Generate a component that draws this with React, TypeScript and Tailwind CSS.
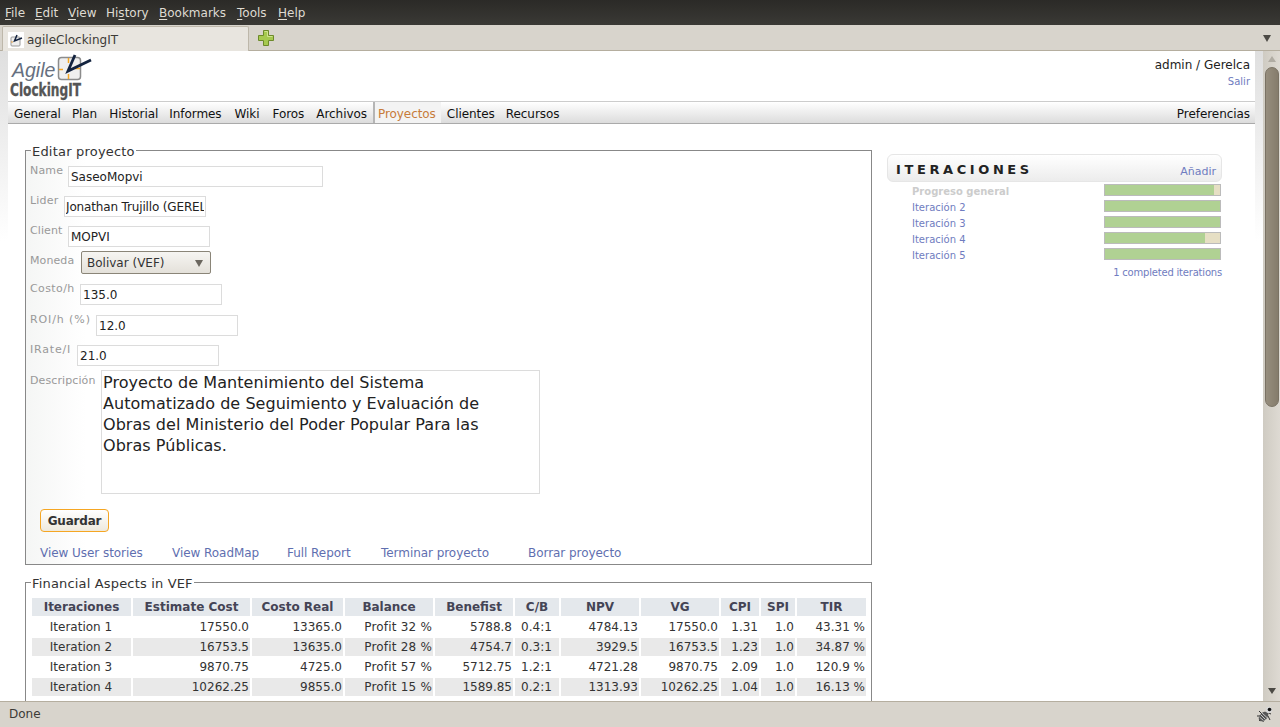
const menus = [
  { pre: "", key: "F", rest: "ile", width: "w-[30px]" },
  { pre: "", key: "E", rest: "dit", width: "w-[33px]" },
  { pre: "", key: "V", rest: "iew", width: "w-[38px]" },
  { pre: "Hi", key: "s", rest: "tory", width: "w-[53px]" },
  { pre: "", key: "B", rest: "ookmarks", width: "w-[78px]" },
  { pre: "", key: "T", rest: "ools", width: "w-[41px]" },
  { pre: "", key: "H", rest: "elp", width: "" },
];

const navLinks = [
  { title: "General", cls: "pl-[6px] pr-[5px]" },
  { title: "Plan", cls: "px-[6px]" },
  { title: "Historial", cls: "pl-[6px] pr-[5px]" },
  { title: "Informes", cls: "pl-[6px] pr-[7px]" },
  { title: "Wiki", cls: "pl-[6px] pr-[7px]" },
  { title: "Foros", cls: "px-[6px]" },
  { title: "Archivos", cls: "px-[6px]" },
  { title: "Proyectos", cls: "border-l-2 border-l-[#b5b5b5] bg-[#f3f3f3] pl-[3px] pr-[5px] text-[#c77b3a]" },
  { title: "Clientes", cls: "pl-[6px] pr-[5px]" },
  { title: "Recursos", cls: "px-[6px]" },
];

const iterations = [
  { name: "Progreso general", pct: 95, general: true },
  { name: "Iteración 2", pct: 100 },
  { name: "Iteración 3", pct: 100 },
  { name: "Iteración 4", pct: 87 },
  { name: "Iteración 5", pct: 100 },
];

const columns = [
  { title: "Iteraciones", width: "w-[99px]", align: "text-center" },
  { title: "Estimate Cost", width: "w-[117px]", align: "text-right" },
  { title: "Costo Real", width: "w-[91px]", align: "text-right" },
  { title: "Balance", width: "w-[88px]", align: "text-right tracking-[0.2px]" },
  { title: "Benefist", width: "w-[78px]", align: "text-right" },
  { title: "C/B", width: "w-[44px]", align: "text-center" },
  { title: "NPV", width: "w-[78px]", align: "text-right" },
  { title: "VG", width: "w-[78px]", align: "text-right" },
  { title: "CPI", width: "w-[38px]", align: "text-right" },
  { title: "SPI", width: "w-[34px]", align: "text-right" },
  { title: "TIR", width: "w-[69px]", align: "text-right" },
];

const rows = [
  ["Iteration 1", "17550.0", "13365.0", "Profit 32 %", "5788.8", "0.4:1", "4784.13", "17550.0", "1.31", "1.0", "43.31 %"],
  ["Iteration 2", "16753.5", "13635.0", "Profit 28 %", "4754.7", "0.3:1", "3929.5", "16753.5", "1.23", "1.0", "34.87 %"],
  ["Iteration 3", "9870.75", "4725.0", "Profit 57 %", "5712.75", "1.2:1", "4721.28", "9870.75", "2.09", "1.0", "120.9 %"],
  ["Iteration 4", "10262.25", "9855.0", "Profit 15 %", "1589.85", "0.2:1", "1313.93", "10262.25", "1.04", "1.0", "16.13 %"],
];

const inputClass =
  "h-[21px] w-[142px] border border-[#dcdcdc] bg-white px-[2px] text-[12px] leading-[19px] text-[#222] outline-none";
const labelClass = "shrink-0 text-[11px] leading-[13px] text-[#999] whitespace-nowrap";

const Logo = () => (
  <svg width="90" height="50" viewBox="8 51 90 50" className="block">
    <rect x="58.5" y="57.5" width="22" height="22" rx="3" fill="#efefef" stroke="#8c8c8c" strokeWidth="1.5" />
    <path d="M68.5 58v5M68.5 74v5M59 69.5h4M75 68.5h5" stroke="#f5a623" strokeWidth="1.5" />
    <path d="M75 55 68 71 91 60" fill="none" stroke="#13233f" strokeWidth="2.8" />
    <text x="12" y="77" fontFamily="Liberation Sans" fontStyle="italic" fontSize="19.5" fill="#667080">
      Agile
    </text>
    <text x="10" y="96" fontFamily="DejaVu Sans Condensed" fontWeight="700" fontSize="17" fill="#555" stroke="#555" strokeWidth="0.3" textLength="71" lengthAdjust="spacingAndGlyphs">
      ClockingIT
    </text>
  </svg>
);

const Favicon = () => (
  <svg width="16" height="16" viewBox="0 0 16 16" className="block">
    <rect width="16" height="16" fill="#fff" />
    <rect x="3" y="5" width="9" height="9" rx="1" fill="#eee" stroke="#999" />
    <path d="M7 7v1M3 10h2" stroke="#e8a040" />
    <path d="M9 3 6.5 9 14 6" fill="none" stroke="#13233f" strokeWidth="1.5" />
  </svg>
);

const PlusIcon = () => (
  <svg width="18" height="18" viewBox="0 0 18 18" className="block">
    <path d="M6.5 1.5h5v5h5v5h-5v5h-5v-5h-5v-5h5z" fill="#a6c94f" stroke="#6d8a2a" />
    <path d="M7.5 2.5h3v5h5" fill="none" stroke="#cfe38f" />
  </svg>
);

const BugIcon = () => (
  <svg width="18" height="18" viewBox="0 0 18 18" className="block">
    <path d="M3 6 6 9M1 11h5M3 16l4-4M8 13l-1 4M12 11l2 4M10 7l5 2" stroke="#333" fill="none" />
    <ellipse cx="7.5" cy="11.5" rx="3.8" ry="5.6" transform="rotate(45 7.5 11.5)" fill="#555" />
    <path d="M4.5 9.5l5 5M6 8l5.5 5M3.5 12l4 3.5" stroke="#c8c8c8" />
    <circle cx="13" cy="5" r="3.2" fill="#d8d8d8" />
    <circle cx="13.5" cy="4.5" r="1.8" fill="#111" />
  </svg>
);

const Field = ({ label, value, labelCls, width }: { label: string; value: string; labelCls: string; width?: string }) => (
  <div className="flex items-start">
    <span className={`${labelClass} ${labelCls} -mt-[2px]`}>{label}</span>
    <input readOnly value={value} className={`${inputClass} ${width ?? ""}`} />
  </div>
);

const App = () => {
  return (
    <div className="flex h-[727px] w-[1280px] flex-col overflow-hidden bg-[#d8d4cc] [font-family:'DejaVu_Sans',sans-serif]">
      {/* browser chrome */}
      <div className="flex h-[25px] items-center bg-[linear-gradient(#2b2a27,#3a3935)] pl-[5px] text-[12px] text-[#dfdbd2]">
        {menus.map((m) => (
          <span key={m.key + m.rest} className={m.width}>
            {m.pre}
            <span className="underline underline-offset-2">{m.key}</span>
            {m.rest}
          </span>
        ))}
      </div>
      <div className="flex h-[26px] items-end border-b border-[#b5ae9f] pl-[2px]">
        <div className="-mb-[1px] flex h-[25px] w-[247px] items-center gap-[3px] rounded-t-[2px] border border-b-0 border-[#bdb7aa] bg-[#e8e5df] pl-[5px] pt-[2px] text-[12px] text-[#3c3b37]">
          <Favicon />
          <span>agileClockingIT</span>
        </div>
        <div className="mb-[3px] ml-[8px]">
          <PlusIcon />
        </div>
        <svg width="8" height="7" viewBox="0 0 8 7" className="mb-[8px] ml-auto mr-[9px]">
          <path d="M0 0h8L4 7z" fill="#4c4a45" />
        </svg>
      </div>

      <div className="flex h-[650px] overflow-hidden">
        <div className="w-[1263px] overflow-hidden bg-[linear-gradient(#dfdfdf,#fff_190px)] px-[8px]">
          <div className="h-full bg-white">
            {/* header */}
            <div className="flex h-[50px] justify-between">
              <Logo />
              <div className="pr-[5px] pt-[7px] text-right">
                <div className="text-[12px] leading-[15px] text-[#222]">admin / Gerelca</div>
                <div className="mt-[2px] text-[10px] leading-[13px] text-[#6f7cc0]">Salir</div>
              </div>
            </div>
            {/* nav */}
            <div className="flex h-[23px] border-y border-t-[#ccc] border-b-[#aaa] bg-[linear-gradient(#fff,#dcdcdc)] text-[12px] leading-[25px] tracking-[-0.06px] text-[#111]">
              {navLinks.map((link) => (
                <span key={link.title} className={link.cls}>
                  {link.title}
                </span>
              ))}
              <span className="ml-auto pr-[5px]">Preferencias</span>
            </div>

            {/* content */}
            <div className="flex items-start pl-[17px] pt-[19px]">
              <div className="w-[847px] shrink-0">
                <fieldset className="border border-[#888] bg-[linear-gradient(to_right,#f5f6f5,#fff_60px)] pb-[4px] pl-[4px]">
                  <legend className="ml-[1px] px-[1px] pt-[2px] text-[13px] leading-[13px] tracking-[0.2px] text-[#333]">
                    Editar proyecto
                  </legend>
                  <div className="mt-[8px]">
                    <Field label="Name" value="SaseoMopvi" labelCls="w-[38px] tracking-[0.2px]" width="!w-[255px]" />
                  </div>
                  <div className="mt-[9px]">
                    <Field
                      label="Lider"
                      value="Jonathan Trujillo (GERELCA)"
                      labelCls="w-[34px] tracking-[0.2px]"
                      width="!px-[1px] tracking-[-0.15px]"
                    />
                  </div>
                  <div className="mt-[9px]">
                    <Field label="Client" value="MOPVI" labelCls="w-[38px] tracking-[0.1px]" />
                  </div>
                  <div className="mt-[4px] flex items-start">
                    <span className={`${labelClass} mt-[3px] w-[51px] tracking-[0.1px]`}>Moneda</span>
                    <div className="flex h-[23px] w-[130px] items-center justify-between rounded-[2px] border border-[#8a8578] bg-[linear-gradient(#f6f5f2,#e4e1da)] pl-[5px] pr-[7px] text-[12px] text-[#333]">
                      <span>Bolivar (VEF)</span>
                      <svg width="8" height="8" viewBox="0 0 8 8">
                        <path d="M0 1h8L4 8z" fill="#6b675f" />
                      </svg>
                    </div>
                  </div>
                  <div className="mt-[10px]">
                    <Field label="Costo/h" value="135.0" labelCls="w-[50px] tracking-[0.4px]" />
                  </div>
                  <div className="mt-[10px]">
                    <Field label="ROI/h (%)" value="12.0" labelCls="w-[66px] tracking-[0.9px]" />
                  </div>
                  <div className="mt-[9px]">
                    <Field label="IRate/I" value="21.0" labelCls="w-[47px] tracking-[0.8px]" />
                  </div>
                  <div className="mt-[4px] flex items-start">
                    <span className={`${labelClass} mt-[4px] w-[71px] tracking-[0.1px]`}>Descripción</span>
                    <textarea
                      readOnly
                      value="Proyecto de Mantenimiento del Sistema Automatizado de Seguimiento y Evaluación de Obras del Ministerio del Poder Popular Para las Obras Públicas."
                      className="h-[124px] w-[439px] resize-none overflow-hidden border border-[#dcdcdc] bg-white pb-[1px] pl-[1px] pr-[30px] pt-[1px] text-[16px] leading-[21px] tracking-[0.05px] text-[#222] outline-none"
                    />
                  </div>
                  <button className="ml-[10px] mt-[15px] block h-[23px] w-[69px] rounded-[4px] border border-[#f5a623] bg-[linear-gradient(#fff,#eee9dd)] text-[12px] font-bold tracking-[-0.2px] text-[#333]">
                    Guardar
                  </button>
                  <div className="ml-[10px] mt-[14px] flex text-[12px] leading-[14px] tracking-[-0.05px] text-[#5f6fb0]">
                    <span className="w-[132px]">View User stories</span>
                    <span className="w-[115px]">View RoadMap</span>
                    <span className="w-[94px]">Full Report</span>
                    <span className="w-[147px]">Terminar proyecto</span>
                    <span>Borrar proyecto</span>
                  </div>
                </fieldset>

                <fieldset className="mt-[9px] border border-[#888] pb-[20px] pl-[4px]">
                  <legend className="ml-[1px] px-[1px] pt-[3px] text-[13px] leading-[13px] tracking-[0.17px] text-[#333]">
                    Financial Aspects in VEF
                  </legend>
                  <table className="mt-[6px] w-[838px] table-fixed border-separate border-spacing-[2px] text-[12px] leading-[18px] text-[#333]">
                    <colgroup>
                      {columns.map((c) => (
                        <col key={c.title} className={c.width} />
                      ))}
                    </colgroup>
                    <thead>
                      <tr>
                        {columns.map((c) => (
                          <th key={c.title} className="bg-[#e4e8ec] p-0 text-center font-bold text-[#444455]">
                            {c.title}
                          </th>
                        ))}
                      </tr>
                    </thead>
                    <tbody>
                      {rows.map((row, i) => (
                        <tr key={row[0]}>
                          {row.map((cell, j) => (
                            <td
                              key={j}
                              className={`p-0 pr-[1px] ${columns[j].align} ${i % 2 === 1 ? "bg-[#e9e9e9]" : ""}`}
                            >
                              {cell}
                            </td>
                          ))}
                        </tr>
                      ))}
                    </tbody>
                  </table>
                </fieldset>
              </div>

              {/* iterations panel */}
              <div className="ml-[15px] mt-[11px] w-[335px]">
                <div className="flex h-[28px] items-center justify-between rounded-[6px] border border-[#e6e6e6] bg-[linear-gradient(#fff,#ececec)] pl-[8px] pr-[5px]">
                  <span className="mt-[3px] text-[13px] font-bold tracking-[3.6px] text-[#222]">ITERACIONES</span>
                  <span className="mt-[8px] text-[11px] text-[#6f7cc0]">Añadir</span>
                </div>
                <div className="mt-[2px] flex flex-col gap-[4px] pl-[25px] pr-[1px]">
                  {iterations.map((it) => (
                    <div key={it.name} className="flex h-[12px] items-center justify-between text-[10px]">
                      <span className={`pt-[2px] ${it.general ? "font-bold text-[#ccc]" : "text-[#6f7cc0]"}`}>{it.name}</span>
                      <div className="h-[12px] w-[117px] border border-[#bbb] bg-[#e6dfc4]">
                        <div className="h-full bg-[#b0d193]" style={{ width: `${it.pct}%` }} />
                      </div>
                    </div>
                  ))}
                </div>
                <div className="mt-[6px] text-right text-[10px] leading-[13px] tracking-[-0.2px] text-[#6f7cc0]">1 completed iterations</div>
              </div>
            </div>
          </div>
        </div>

        {/* scrollbar */}
        <div className="flex w-[17px] flex-col items-center bg-[linear-gradient(to_right,#cfcbc2,#dedad3)]">
          <svg width="8" height="6" viewBox="0 0 8 6" className="mt-[5px] shrink-0">
            <path d="M4 0l4 6H0z" fill="#b0aca3" />
          </svg>
          <div className="mt-[5px] h-[340px] w-[14px] shrink-0 rounded-[7px] border border-[#7a7264] bg-[linear-gradient(to_right,#978e7e,#857c6c)]" />
          <svg width="8" height="6" viewBox="0 0 8 6" className="mb-[7px] mt-auto shrink-0">
            <path d="M0 0h8L4 6z" fill="#4c4a45" />
          </svg>
        </div>
      </div>

      {/* status bar */}
      <div className="flex h-[26px] items-center justify-between border-t border-[#b5ae9f] pb-[1px] pl-[9px] pr-[6px] text-[12px] text-[#3c3b37]">
        <span>Done</span>
        <BugIcon />
      </div>
    </div>
  );
};

export default App;
